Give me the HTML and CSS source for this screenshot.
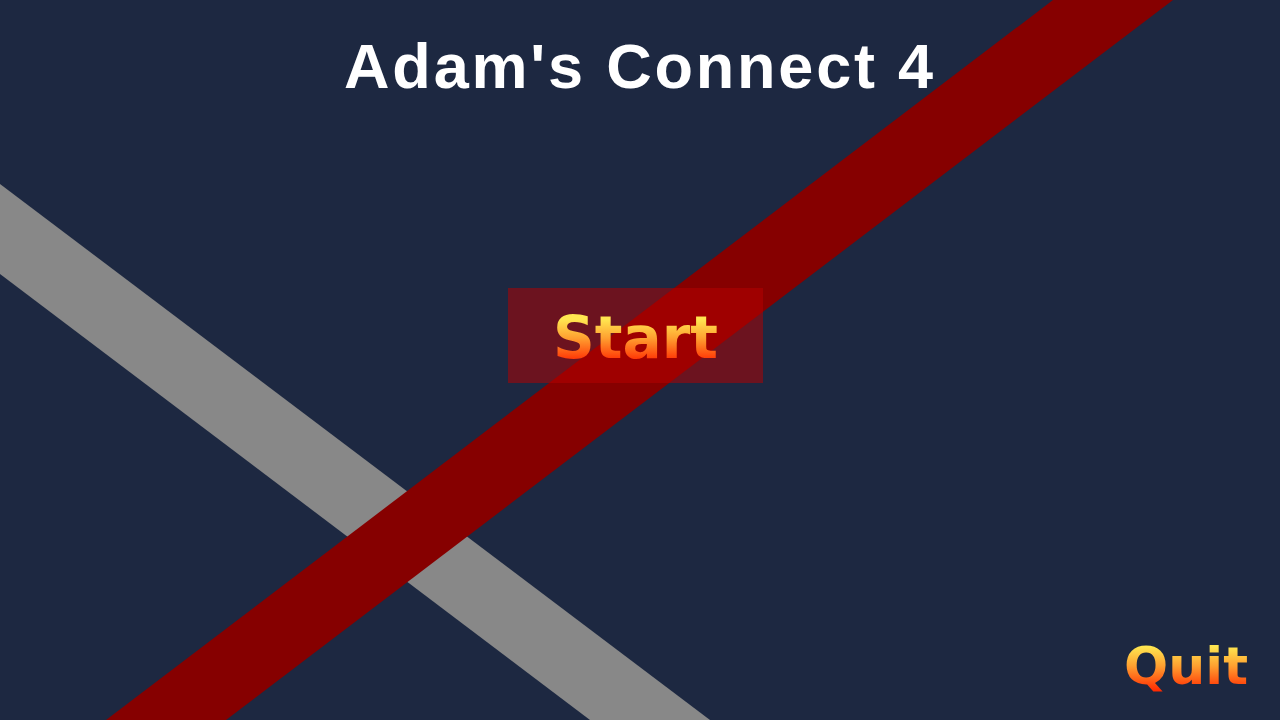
FILE: index.html
```html
<!DOCTYPE html>
<html lang="en">
<head>
<meta charset="UTF-8">
<meta name="viewport" content="width=device-width, initial-scale=1.0">
<title>Adam's Connect 4</title>
<link rel="stylesheet" href="styles.css">
</head>
<body>

    <!-- crossed stripes behind the menu -->
    <svg class="stripes" viewBox="0 0 1280 720" preserveAspectRatio="none">
        <polygon class="stripe-grey" points="0,184 0,274 590,720 710,720"/>
        <polygon class="stripe-red" points="1053,0 1173,0 226,720 106,720"/>
    </svg>

    <div class="screen">
        <h1 class="title">Adam's Connect 4</h1>

        <div class="menu">
            <button class="start-btn"><span class="fire-text">Start</span></button>
        </div>

        <div class="footer">
            <button class="quit-btn"><span class="fire-text">Quit</span></button>
        </div>
    </div>

</body>
</html>
```

FILE: styles.css
```css
body {
    margin: 0;
    padding: 0;
    background-color: #1d2841;
    font-family: "Liberation Sans", Arial, sans-serif;
    overflow: hidden;
}
.stripes {
    position: fixed;
    left: 0;
    top: 0;
    width: 100%;
    height: 100%;
    z-index: 0;
}
.stripe-grey {
    fill: #888888;
}
.stripe-red {
    fill: #860000;
}
.screen {
    position: relative;
    z-index: 1;
    height: 100vh;
    display: flex;
    flex-direction: column;
    align-items: center;
}
.title {
    margin: 35px 0 0 0;
    color: #fff;
    font-size: 63px;
    line-height: 63px;
    font-weight: bold;
    letter-spacing: 2.8px;
}
.menu {
    margin-top: 190px;
    margin-right: 9px;
}
button {
    border: none;
    cursor: pointer;
    font-family: "DejaVu Sans", Verdana, sans-serif;
    font-weight: bold;
}
.start-btn {
    width: 255px;
    height: 95px;
    padding: 4px 0 0 0;
    background-color: rgba(182, 0, 0, 0.52);
    font-size: 58px;
    display: flex;
    align-items: center;
    justify-content: center;
}
.fire-text {
    background: linear-gradient(#ffe650 18%, #ffa030 50%, #ff2800 92%);
    -webkit-background-clip: text;
    background-clip: text;
    color: transparent;
    line-height: 1;
}
.footer {
    margin-top: auto;
    align-self: stretch;
    display: flex;
    justify-content: flex-end;
    padding: 0 32px 24px 0;
}
.quit-btn {
    background: none;
    padding: 0;
    font-size: 52px;
}
```
